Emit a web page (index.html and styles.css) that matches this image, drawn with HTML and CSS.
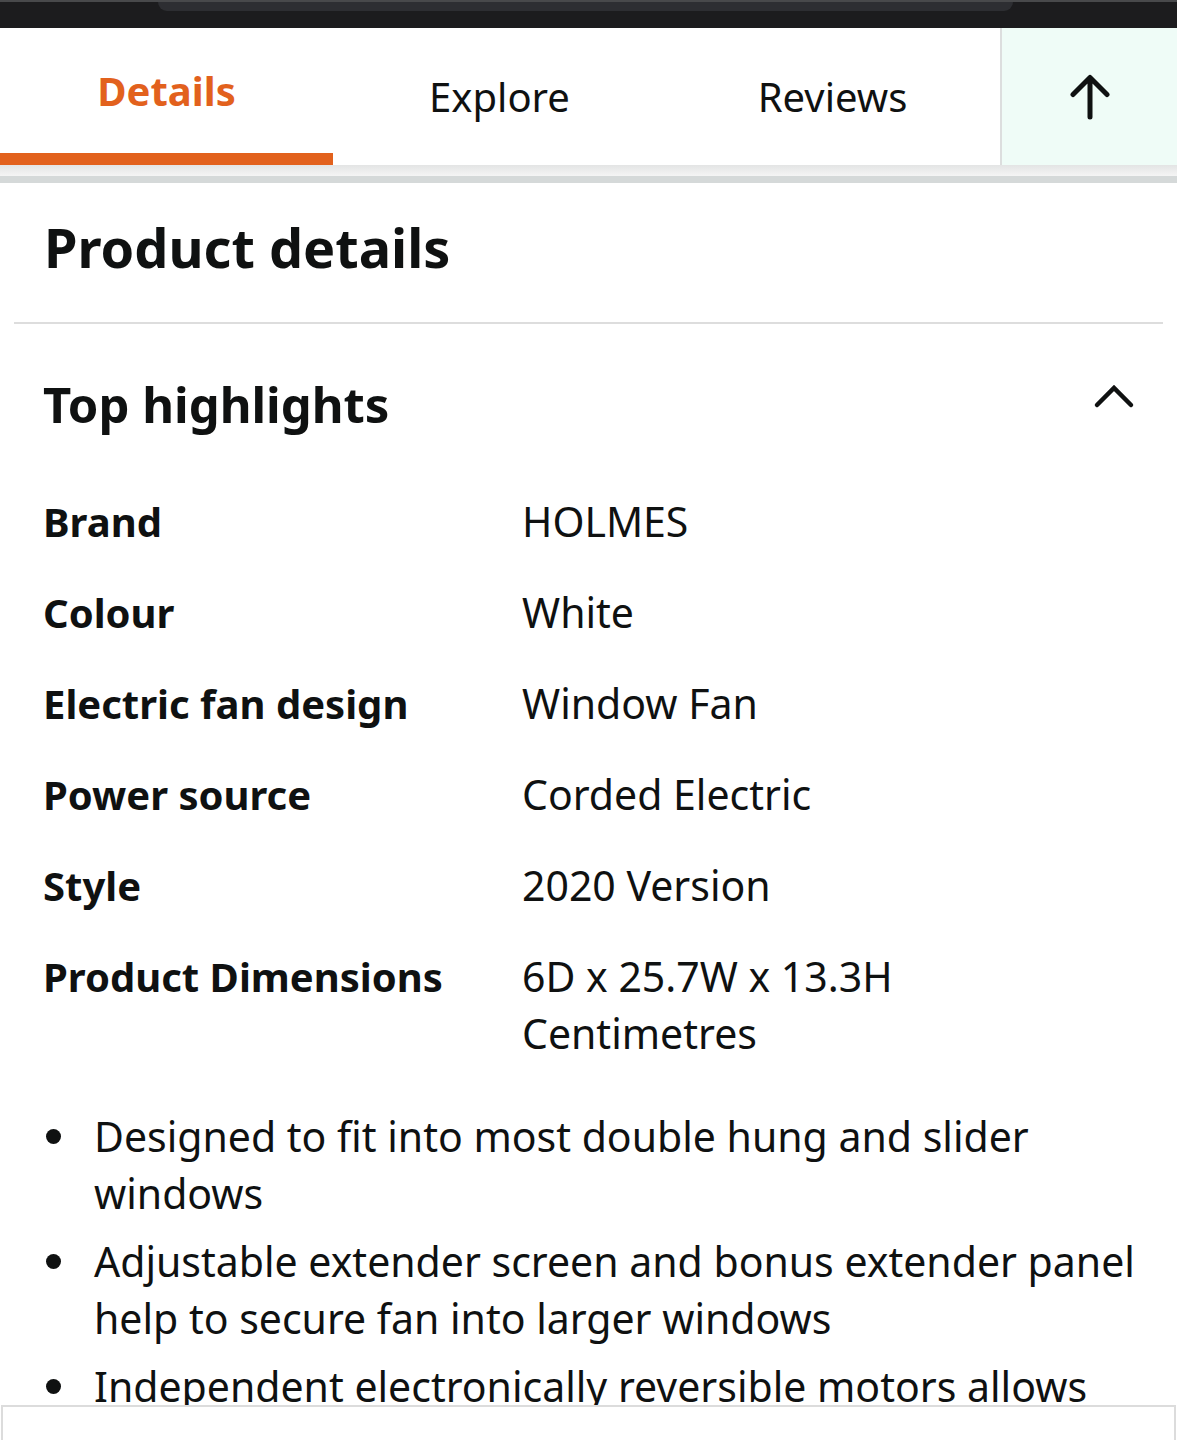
FILE: index.html
```html
<!DOCTYPE html>
<html>
<head>
  <title>Product details</title>
  <link rel="stylesheet" href="styles.css">
</head>
<body>
  <div class="statusbar"><div class="notch"></div></div>
  <nav class="tabs">
    <a class="tab active" href="#details">Details</a>
    <a class="tab" href="#explore">Explore</a>
    <a class="tab" href="#reviews">Reviews</a>
    <a class="tab-top" href="#top">
      <svg width="40" height="48" viewBox="0 0 40 48">
        <path d="M20 5 V44 M3 21.5 L20 4.5 L37 21.5" fill="none" stroke="#0f1111" stroke-width="5" stroke-linecap="round" stroke-linejoin="round"/>
      </svg>
    </a>
  </nav>
  <div class="tabs-shadow"></div>
  <div class="band"></div>

  <section class="card" id="details">
    <h2 class="card-title">Product details</h2>

    <div class="section-head">
      <h3>Top highlights</h3>
      <svg class="chevron" width="44" height="30" viewBox="0 0 44 30">
        <path d="M5 25 L22 8 L39 25" fill="none" stroke="#0f1111" stroke-width="4.5" stroke-linecap="round" stroke-linejoin="miter"/>
      </svg>
    </div>

    <div class="specs">
      <div class="spec-row">
        <span class="spec-label">Brand</span>
        <span class="spec-value">HOLMES</span>
      </div>
      <div class="spec-row">
        <span class="spec-label">Colour</span>
        <span class="spec-value">White</span>
      </div>
      <div class="spec-row">
        <span class="spec-label">Electric fan design</span>
        <span class="spec-value">Window Fan</span>
      </div>
      <div class="spec-row">
        <span class="spec-label">Power source</span>
        <span class="spec-value">Corded Electric</span>
      </div>
      <div class="spec-row">
        <span class="spec-label">Style</span>
        <span class="spec-value">2020 Version</span>
      </div>
      <div class="spec-row">
        <span class="spec-label">Product Dimensions</span>
        <span class="spec-value">6D x 25.7W x 13.3H Centimetres</span>
      </div>
    </div>

    <ul class="bullets">
      <li>Designed to fit into most double hung and slider windows</li>
      <li>Adjustable extender screen and bonus extender panel help to secure fan into larger windows</li>
      <li>Independent electronically reversible motors allows each fan to intake or exhaust air</li>
    </ul>
  </section>

  <div class="bottom-bar"></div>
</body>
</html>
```

FILE: styles.css
```css
body {
  margin: 0;
  padding: 0;
  font-family: "Noto Sans", "Open Sans", sans-serif;
  color: #0f1111;
  background-color: #ffffff;
}

.statusbar {
  height: 26px;
  background-color: #1c1c1e;
  border-top: 2px solid #48494b;
}

.notch {
  margin-left: 158px;
  width: 855px;
  height: 9px;
  background-color: #2d2e32;
  border-radius: 0 0 22px 22px;
}

.tabs {
  display: flex;
  height: 137px;
  background-color: #ffffff;
}

.tab {
  flex: 0 0 333px;
  display: flex;
  align-items: center;
  justify-content: center;
  font-size: 40px;
  line-height: 47px;
  color: #0f1111;
  text-decoration: none;
}

.tab.active {
  color: #e2611d;
  font-weight: bold;
  border-bottom: 12px solid #e2611d;
}

.tab-top {
  flex: 1;
  display: flex;
  align-items: center;
  justify-content: center;
  background-color: #effcf7;
  border-left: 2px solid #dcdede;
  margin-left: 1px;
}

.tabs-shadow {
  height: 11px;
  background: linear-gradient(#e3e4e4, #f5f5f5);
}

.band {
  height: 7px;
  background-color: #d5d9d9;
}

.card {
  margin: 0 14px;
}

.card-title {
  margin: 0;
  padding: 32px 0 42px 30px;
  font-size: 54px;
  line-height: 65px;
  font-weight: bold;
  border-bottom: 2px solid #dddddd;
}

.section-head {
  display: flex;
  justify-content: space-between;
  padding: 50px 27px 0 29px;
}

.section-head h3 {
  margin: 0;
  font-size: 49px;
  line-height: 60px;
  font-weight: bold;
}

.chevron {
  margin-top: 6px;
}

.specs {
  margin-top: 42px;
  padding-left: 29px;
}

.spec-row {
  display: grid;
  grid-template-columns: 479px 500px;
  padding: 17px 0;
  font-size: 41px;
  line-height: 57px;
}

.spec-label {
  font-weight: bold;
  font-size: 40px;
}

.bullets {
  list-style: none;
  margin: 29px 0 0 0;
  padding: 0 8px 0 31px;
  font-size: 41px;
  line-height: 57px;
}

.bullets li {
  display: flex;
  margin-bottom: 11px;
}

.bullets li::before {
  content: "";
  flex: none;
  width: 15px;
  height: 15px;
  margin: 21px 33px 0 1px;
  border-radius: 50%;
  background-color: #0f1111;
}

.bottom-bar {
  position: fixed;
  left: 1px;
  right: 1px;
  bottom: 0;
  height: 33px;
  background-color: #ffffff;
  border: 2px solid #dcdcdc;
  border-bottom: none;
}
```
